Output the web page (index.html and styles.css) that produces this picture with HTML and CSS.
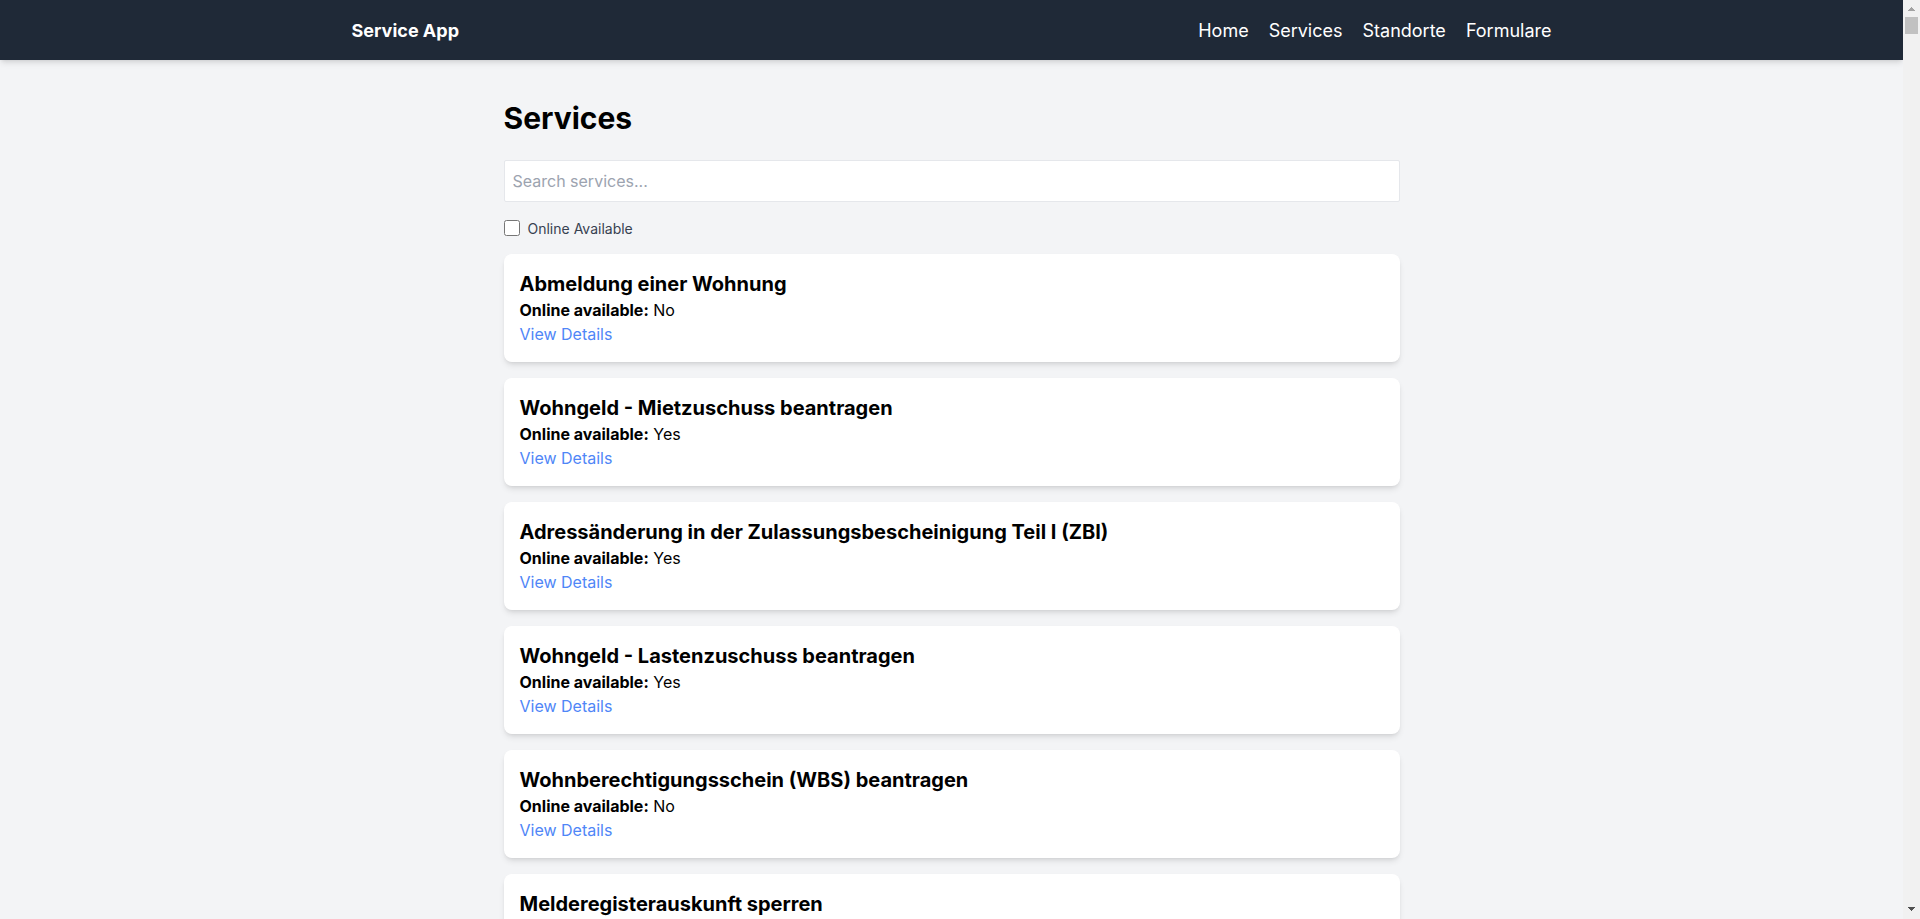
FILE: index.html
```html
<!DOCTYPE html>
<html lang="de">
<head>
<meta charset="utf-8">
<title>Service App</title>
<link rel="stylesheet" href="styles.css">
</head>
<body>
<nav class="navbar">
  <div class="nav-inner">
    <a class="brand" href="#">Service App</a>
    <div class="nav-links">
      <a href="#">Home</a>
      <a href="#">Services</a>
      <a href="#">Standorte</a>
      <a href="#">Formulare</a>
    </div>
  </div>
</nav>
<main class="main">
  <h1 class="page-title">Services</h1>
  <input class="search" type="text" placeholder="Search services...">
  <label class="filter"><input type="checkbox" class="check"><span>Online Available</span></label>
  <div class="list">
    <div class="card">
      <h2 class="card-title">Abmeldung einer Wohnung</h2>
      <p class="card-meta"><strong>Online available:</strong> No</p>
      <a class="card-link" href="#">View Details</a>
    </div>
    <div class="card">
      <h2 class="card-title">Wohngeld - Mietzuschuss beantragen</h2>
      <p class="card-meta"><strong>Online available:</strong> Yes</p>
      <a class="card-link" href="#">View Details</a>
    </div>
    <div class="card">
      <h2 class="card-title">Adressänderung in der Zulassungsbescheinigung Teil I (ZBI)</h2>
      <p class="card-meta"><strong>Online available:</strong> Yes</p>
      <a class="card-link" href="#">View Details</a>
    </div>
    <div class="card">
      <h2 class="card-title">Wohngeld - Lastenzuschuss beantragen</h2>
      <p class="card-meta"><strong>Online available:</strong> Yes</p>
      <a class="card-link" href="#">View Details</a>
    </div>
    <div class="card">
      <h2 class="card-title">Wohnberechtigungsschein (WBS) beantragen</h2>
      <p class="card-meta"><strong>Online available:</strong> No</p>
      <a class="card-link" href="#">View Details</a>
    </div>
    <div class="card">
      <h2 class="card-title">Melderegisterauskunft sperren</h2>
      <p class="card-meta"><strong>Online available:</strong> No</p>
      <a class="card-link" href="#">View Details</a>
    </div>
    <div class="card">
      <h2 class="card-title">Anmeldung einer Wohnung</h2>
      <p class="card-meta"><strong>Online available:</strong> Yes</p>
      <a class="card-link" href="#">View Details</a>
    </div>
    <div class="card">
      <h2 class="card-title">Personalausweis beantragen</h2>
      <p class="card-meta"><strong>Online available:</strong> No</p>
      <a class="card-link" href="#">View Details</a>
    </div>
  </div>
</main>
</body>
</html>
```

FILE: styles.css
```css
* { box-sizing: border-box; }
html {
  margin: 0;
  padding: 0;
  /* classic browser scrollbar strip on the right */
  background-color: #f1f1f1;
  background-image:
    linear-gradient(to top left, #a3a3a3 50%, transparent 50%),
    linear-gradient(to top right, #a3a3a3 50%, transparent 50%),
    linear-gradient(#c1c1c1, #c1c1c1),
    linear-gradient(to bottom left, #505050 50%, transparent 50%),
    linear-gradient(to bottom right, #505050 50%, transparent 50%);
  background-size: 4px 4px, 4px 4px, 13px 17px, 4px 4px, 4px 4px;
  background-position:
    right 8px top 7px,
    right 4px top 7px,
    right 2px top 17px,
    right 8px bottom 8px,
    right 4px bottom 8px;
  background-repeat: no-repeat;
  background-attachment: fixed;
}
body {
  margin: 0 17px 0 0;
  padding: 0;
  min-height: 100vh;
  background: #f3f4f6;
  font-family: Inter, "Liberation Sans", sans-serif;
  color: #000;
}
.navbar {
  background: #1f2937;
  height: 60px;
  box-shadow: 0 4px 6px -1px rgba(0,0,0,.1), 0 2px 4px -2px rgba(0,0,0,.1);
  position: relative;
}
.nav-inner {
  max-width: 1200px;
  height: 60px;
  margin: 0 auto;
  display: flex;
  align-items: center;
  justify-content: space-between;
}
.brand {
  color: #fff;
  font-size: 18px;
  font-weight: 700;
  text-decoration: none;
}
.nav-links {
  display: flex;
  gap: 20px;
}
.nav-links a {
  color: #fff;
  font-size: 18px;
  text-decoration: none;
}
.main {
  max-width: 896px;
  margin: 0 auto;
  padding: 40px 0 32px;
}
.page-title {
  font-size: 30px;
  line-height: 36px;
  font-weight: 700;
  margin: 0 0 24px;
}
.search {
  display: block;
  width: 100%;
  height: 42px;
  padding: 8px;
  font: 16px Inter, "Liberation Sans", sans-serif;
  border: 1px solid #e5e7eb;
  border-radius: 2px;
  background: #fff;
  outline: none;
}
.search::placeholder { color: #9ca3af; }
.filter {
  display: flex;
  align-items: center;
  gap: 8px;
  margin: 16px 0 16px;
  height: 20px;
  font-size: 14px;
  color: #374151;
}
.check {
  width: 16px;
  height: 16px;
  margin: 0;
}
.list {
  display: flex;
  flex-direction: column;
  gap: 16px;
}
.card {
  background: #fff;
  border-radius: 8px;
  padding: 16px;
  box-shadow: 0 4px 6px -1px rgba(0,0,0,.1), 0 2px 4px -2px rgba(0,0,0,.1);
}
.card-title {
  font-size: 20px;
  line-height: 28px;
  font-weight: 700;
  margin: 0;
}
.card-meta {
  margin: 0;
  font-size: 16px;
  line-height: 24px;
}
.card-link {
  display: inline-block;
  font-size: 16px;
  line-height: 24px;
  color: #4f86f7;
  text-decoration: none;
}
```
